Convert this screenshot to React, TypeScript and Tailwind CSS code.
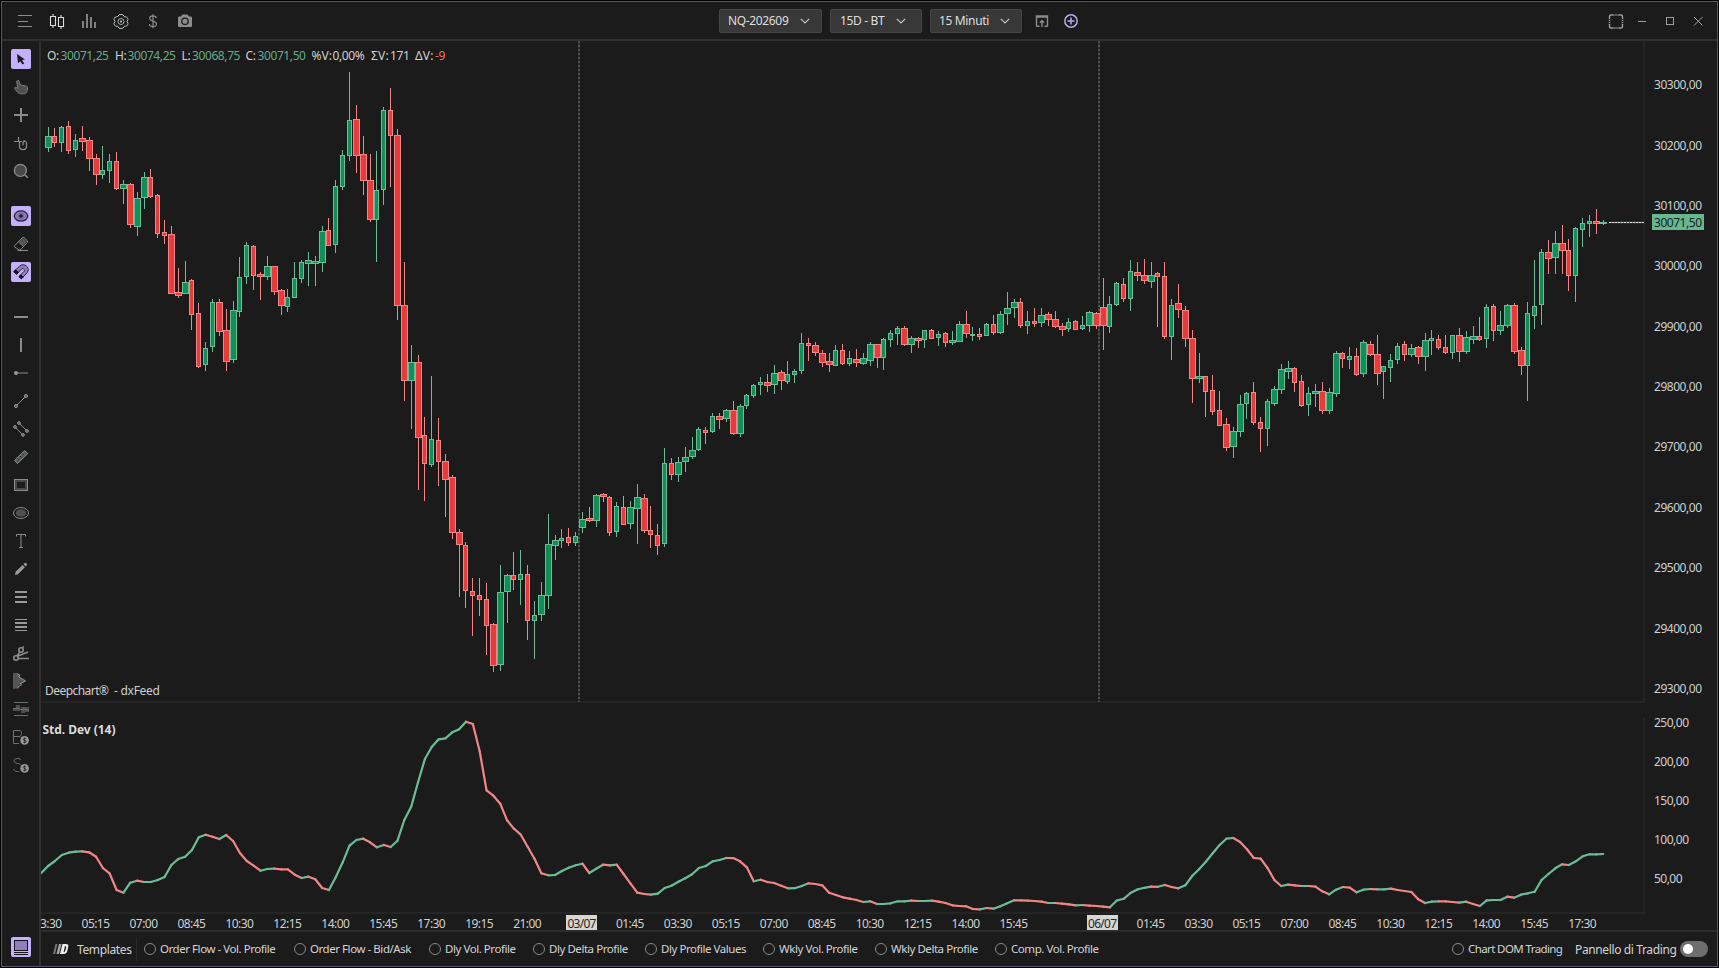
import type { ReactNode } from "react";

type Candle = [dir: "G" | "R", high: number, top: number, bottom: number, low: number];

const RAW_CANDLES = `
G127,136,148,152 R128,136,143,147 G126,127,143,152 R121,126,151,154 G134,140,150,157 R126,138,142,151 R137,140,159,171
R154,158,175,185 G146,170,175,179 G154,161,171,183 R152,161,189,190 G180,184,189,204 R183,184,225,228 G192,198,227,236
G172,177,198,209 R169,177,197,198 R194,195,234,238 R220,232,236,244 R226,234,294,294 R268,292,296,298 G261,282,294,294
R279,280,315,330 R303,313,367,368 G342,348,365,371 G299,302,347,352 R299,302,332,336 R309,330,362,371 G301,310,360,363
G257,277,312,317 G242,245,277,284 R245,246,276,290 R272,274,277,300 G256,266,277,280 R266,266,292,295 R289,290,306,315
G289,297,307,312 G262,278,298,298 G260,262,279,283 G252,260,264,286 G256,261,264,286 G226,231,263,272 R218,230,246,246
G180,186,245,253 G150,155,187,190 G72,120,156,161 R105,119,156,173 R136,154,181,195 R154,180,220,222 G151,190,220,262
G107,110,190,205 R88,110,136,187 R129,135,306,320 R262,305,381,401 G345,362,381,429 R355,362,438,490 R417,435,464,501
G376,439,465,467 R418,440,462,486 R454,461,480,517 R475,477,533,539 R529,532,545,597 R542,545,591,608 R578,591,596,636
R578,595,600,616 R583,599,626,655 R623,624,666,672 G565,592,665,671 G574,575,592,623 R552,575,580,590 G550,574,580,605
R565,574,621,640 G601,615,621,659 G582,595,615,621 G514,544,596,609 G535,540,546,560 G529,538,541,548 R528,537,543,546
G532,536,543,546 G512,519,528,533 R507,518,521,522 G494,495,521,527 R493,494,497,502 R496,497,533,536 G502,506,532,537
R496,507,525,525 G501,507,524,529 G484,497,509,544 R494,498,531,533 R506,530,535,548 R524,535,546,555 G448,463,544,547
R458,463,475,480 G457,462,475,482 G447,457,462,472 G437,450,457,459 G427,429,450,451 R427,430,433,444 G413,416,432,433
R413,416,420,429 G409,410,419,422 R401,410,434,435 G404,406,434,437 G394,395,406,409 G384,385,396,398 G377,382,385,395
R374,382,386,392 G365,373,385,394 R370,372,381,390 G361,374,382,384 G369,371,375,383 G333,343,371,374 R338,343,346,361
R342,345,353,356 R350,353,363,367 R353,361,365,372 G345,350,366,366 R344,350,364,365 G351,358,364,366 R349,359,363,367
G353,358,364,365 G342,344,361,366 R344,344,358,368 G338,339,358,370 G330,333,340,347 G326,328,334,345 R326,328,345,346
G336,338,345,353 R337,338,341,348 G330,330,340,348 R329,330,339,339 G331,334,338,346 R332,333,343,347 G331,340,343,345
G321,324,342,342 R311,324,334,338 G327,334,336,341 R328,334,337,340 G323,324,336,336 R315,324,333,335 G311,314,333,334
G292,308,314,325 G299,302,308,318 R298,302,326,328 G311,321,326,334 R308,321,324,327 G308,315,323,327 R312,314,320,326
R311,319,327,328 R323,326,330,336 G318,322,329,332 R320,321,330,330 G316,325,329,330 G311,312,326,332 R312,313,326,329
R278,307,326,350 G296,304,327,333 G282,283,305,306 R278,284,299,302 G260,271,299,311 R262,272,276,281 R259,275,281,284
G262,275,282,288 R272,273,277,327 R262,276,337,339 G299,305,337,360 R284,303,310,318 R306,310,339,347 R330,338,379,403
G353,376,379,383 R376,376,392,417 R375,390,412,415 R391,410,426,426 R418,424,448,451 G427,431,447,458 G395,404,432,437
G392,393,404,419 R382,392,423,425 R417,422,429,452 G399,401,429,446 G386,389,404,406 G364,369,390,394 G361,368,372,379
R367,368,383,392 R375,381,406,407 G387,393,405,416 G384,391,394,407 R382,391,411,414 G388,392,411,414 G351,353,394,397
R352,353,359,368 G347,356,360,369 R348,356,375,376 G340,342,374,377 R341,344,355,356 R335,354,374,385 G366,366,372,399
G354,360,368,382 G343,346,360,364 R341,344,355,361 G344,348,355,357 R346,347,357,364 G333,340,357,371 G330,338,341,355
R335,339,348,350 R335,347,353,354 G335,335,353,359 R328,335,352,362 G331,337,352,354 G326,336,340,344 R317,336,340,341
G304,307,339,348 R304,306,331,341 G311,325,331,335 G304,305,326,328 R303,305,352,354 R347,350,366,375 G302,313,366,401
G260,306,316,329 G249,252,305,325 R240,252,259,274 G231,243,258,274 R225,243,251,274 R239,250,276,291 G227,228,276,302
G218,223,230,247 G215,221,224,237 R209,221,224,234 G220,222,224,225`;

const CANDLES: Candle[] = RAW_CANDLES.trim()
  .split(/\s+/)
  .map((s) => [s[0], ...s.slice(1).split(",").map(Number)] as Candle);

/* Standard deviation line; the first sample belongs to the bar just left of the first candle. */
const STD_DEV = [
  873, 866, 861, 855, 852.7, 851.7, 851.3, 852.3, 856.7, 868, 873.7, 890, 892.7, 882.7, 880.7, 882, 882, 880, 877, 865,
  859, 856.7, 850, 837.3, 834.7, 836.7, 839, 835, 841, 853, 861, 865.7, 870.7, 869, 868.7, 869.3, 869.4, 874.7, 878,
  876.7, 879.3, 888, 890, 877, 862.3, 845.7, 840, 838.7, 842.3, 847.3, 845, 847, 840.7, 820, 806.7, 782.3, 759, 747,
  739.3, 738.3, 732.3, 729.3, 721.7, 724, 751.3, 790.3, 795.7, 803.7, 820.3, 828.7, 834.7, 846.7, 858.7, 873.3, 875.3,
  875, 871, 867.7, 865.3, 863.7, 873, 868.7, 864.7, 865.3, 864.7, 874, 883.3, 892.7, 894, 894.7, 893.7, 888, 885.7,
  881.7, 878.3, 874.3, 868, 866, 861.3, 860, 858, 858.1, 861.3, 867.3, 881.3, 879.7, 882, 883, 885.7, 888.3, 888.2, 886,
  883.3, 884, 885.3, 892.7, 895, 897.3, 898.7, 900, 902, 901.3, 904, 904, 903.3, 901.3, 901.3, 900.7, 901, 901, 900.7,
  901.7, 903, 905.3, 906, 906.3, 909, 909.3, 908, 908.7, 906.3, 903.3, 900.3, 900.4, 900.7, 901, 901.7, 903, 903, 903.7,
  904.3, 905.3, 905, 905.7, 906, 906.7, 907.3, 900.5, 898.8, 893, 889.5, 887.8, 886.7, 886.8, 885, 887, 888.3, 885.3,
  876, 869.3, 861.7, 853.3, 845, 838.7, 838, 842, 849.3, 858, 858.7, 868, 880, 886, 884.7, 885.3, 886, 886, 886.7,
  891.3, 894.3, 889.7, 887, 887.7, 892.3, 889.7, 889, 889.3, 889.3, 888.7, 890, 891, 892, 899.3, 903, 901.7, 901.3,
  901.4, 902, 902.7, 901.7, 904, 906, 900.3, 900, 900, 896.7, 897.7, 894.7, 893.3, 891.7, 880, 874, 868.3, 864.3, 865,
  861.3, 856.3, 854.3, 854.3, 854,
];

const barX = (i: number) => 48.1 + 6.8507 * i;

const GREEN = "#0f9058";
const GREEN_EDGE = "#6bbd97";
const RED = "#e83b3c";
const RED_EDGE = "#f28686";

const TIMES: [number, string][] = [
  [0, "03:30"], [7, "05:15"], [14, "07:00"], [21, "08:45"], [28, "10:30"], [35, "12:15"], [42, "14:00"],
  [49, "15:45"], [56, "17:30"], [63, "19:15"], [70, "21:00"], [85, "01:45"], [92, "03:30"], [99, "05:15"],
  [106, "07:00"], [113, "08:45"], [120, "10:30"], [127, "12:15"], [134, "14:00"], [141, "15:45"],
  [161, "01:45"], [168, "03:30"], [175, "05:15"], [182, "07:00"], [189, "08:45"], [196, "10:30"],
  [203, "12:15"], [210, "14:00"], [217, "15:45"], [224, "17:30"],
];

const DAYS: [number, string][] = [[78, "03/07"], [154, "06/07"]];

const PRICES = [30300, 30200, 30100, 30000, 29900, 29800, 29700, 29600, 29500, 29400, 29300];
const DEV_LEVELS = ["250,00", "200,00", "150,00", "100,00", "50,00"];

function CandleShape({ candle, index }: { candle: Candle; index: number }) {
  const [dir, high, top, bottom, low] = candle;
  const c = barX(index);
  const mid = Math.floor(c);
  const half = c - mid < 0.49 ? 3 : 2;
  const edge = dir === "G" ? GREEN_EDGE : RED_EDGE;
  const fill = dir === "G" ? GREEN : RED;
  return (
    <g>
      <rect x={mid} y={high} width={1} height={low - high} fill={edge} />
      <rect x={mid - half} y={top} width={half * 2 + 1} height={bottom - top} fill={edge} />
      {bottom - top > 2 && (
        <rect x={mid - half + 1} y={top + 1} width={half * 2 - 1} height={bottom - top - 2} fill={fill} />
      )}
    </g>
  );
}

function Chart() {
  return (
    <svg
      className="block h-[891px] w-[1676px] shrink-0"
      viewBox="41 41 1676 891"
      fontFamily="'Noto Sans', sans-serif"
      fontSize="12"
      fill="#d0d0d0"
    >
      <g shapeRendering="crispEdges">
        <rect x={41} y={701} width={1604} height={2} fill="#242424" />
        <rect x={1643} y={41} width={2} height={661} fill="#242424" />
        <rect x={1643} y={718} width={2} height={195} fill="#242424" />
        <rect x={41} y={912} width={1604} height={2} fill="#242424" />
        <rect x={41} y={930} width={1676} height={2} fill="#2c2c2c" />
        {[579, 1099].map((x) => (
          <g key={x}>
            <rect x={x - 1} y={41} width={2} height={661} fill="#2b2b2b" />
            <path d={`M${x} 41V702`} stroke="#505050" strokeWidth={2} strokeDasharray="2 2" />
          </g>
        ))}
        {CANDLES.map((c, i) => (
          <CandleShape key={i} candle={c} index={i} />
        ))}
        <rect x={1609} y={221} width={35} height={3} fill="#2c2c2c" />
        <rect x={1609} y={222} width={35} height={1} fill="#777" />
        <path d="M1609 222.5H1644" stroke="#d5ded9" strokeWidth={1} strokeDasharray="2 1" />
      </g>

      <g strokeWidth={2.2} strokeLinecap="round">
        {STD_DEV.slice(1).map((y, i) => (
          <line
            key={i}
            x1={barX(i - 1)}
            y1={STD_DEV[i]}
            x2={barX(i)}
            y2={y}
            stroke={y <= STD_DEV[i] ? "#6bbd97" : "#f28686"}
          />
        ))}
      </g>

      {PRICES.map((p, i) => (
        <text key={p} x={1654} y={Math.round(89.2 + 60.37 * i)} textLength={48}>
          {p},00
        </text>
      ))}
      <rect x={1652} y={214} width={52} height={16} fill="#66b890" shapeRendering="crispEdges" />
      <text x={1654} y={227} textLength={48} fill="#16231c">
        30071,50
      </text>
      {DEV_LEVELS.map((v, i) => (
        <text key={v} x={1654} y={Math.round(727.3 + 38.8 * i)} textLength={v.length === 6 ? 35 : 28.5}>
          {v}
        </text>
      ))}

      {TIMES.map(([i, t]) => (
        <text key={i} x={barX(i) - 14.5} y={928} textLength={28.5}>
          {t}
        </text>
      ))}
      {DAYS.map(([i, t]) => (
        <g key={i}>
          <rect x={Math.round(barX(i)) - 16} y={915} width={31} height={15} fill="#d6d6d2" shapeRendering="crispEdges" />
          <text x={barX(i) - 15} y={928} textLength={29} fill="#262626">
            {t}
          </text>
        </g>
      ))}

      <text x={45} y={695}>
        <tspan textLength={64}>Deepchart®</tspan>
        <tspan x={114} textLength={46}>- dxFeed</tspan>
      </text>
      <text x={42.5} y={734} textLength={73} fontWeight={700} fill="#dcdcdc">
        Std. Dev (14)
      </text>
    </svg>
  );
}

function Stat({ label, value, width, gap, tone }: { label: string; value: string; width: string; gap: string; tone: string }) {
  return (
    <span className={`flex shrink-0 ${width}`}>
      <span className={`shrink-0 ${gap}`}>{label}</span>
      <span className={tone}>{value}</span>
    </span>
  );
}

function Tool({ children, active = false }: { children: ReactNode; active?: boolean }) {
  return (
    <div className="flex h-7 w-[37px] items-center justify-center">
      <div className={active ? "size-5 rounded-[2px] bg-[#c3b1fd]" : "size-5"}>
        <svg viewBox="0 0 20 20" className="size-5" fill="none" stroke="#8c8c8c" strokeWidth={1}>
          {children}
        </svg>
      </div>
    </div>
  );
}

function Coin() {
  return (
    <g>
      <circle cx={13.6} cy={13.4} r={4.3} fill="#989898" stroke="none" />
      <path d="M15.2 11.8C14.6 11.1 12.2 11 12.2 12.4C12.2 13.8 15.2 13 15.2 14.5C15.2 15.8 12.6 15.8 12 14.9M13.7 10.5V16.3" stroke="#2a2a2a" strokeWidth={0.9} />
    </g>
  );
}

function Toolbar() {
  return (
    <aside className="flex w-[39px] shrink-0 flex-col border-r-2 border-[#303030] pt-1">
      <div className="flex flex-col">
        <Tool active>
          <path d="M6 5L14 10.4L11 11L13.2 14.6L11.4 15.6L9.4 12.2L7 14.2Z" fill="#1b1b1b" stroke="none" />
        </Tool>
        <Tool>
          <path d="M6.2 3.6C7.4 2.9 8 3.8 8.3 4.8L9.3 8L14.5 8.8C16.4 9.2 16.8 10.4 16.5 12L15.8 14.6C15.3 16.2 14.3 16.8 12.8 16.8H9.4C8 16.8 7.2 16 6.4 15L3.6 11.6C3.3 10.6 4.3 10 5.2 10.4L7 11.4L5.7 5.2C5.6 4.6 5.7 3.9 6.2 3.6Z" fill="#505050" stroke="#7c7c7c" />
        </Tool>
        <Tool>
          <path d="M10 3V17M3 10H17" strokeWidth={2} />
        </Tool>
        <Tool>
          <path d="M3 8.5H11M7.5 4V8.5M8.5 8.5V13.5C8.5 17.6 15.5 17.6 15.5 13.5V10C15.5 8 12 8 12 10V12.5M12 8.5L14 7.5" strokeWidth={1.2} />
        </Tool>
        <Tool>
          <circle cx={9.4} cy={9.4} r={6} fill="#484848" strokeWidth={1.3} />
          <path d="M13.8 13.8L16.8 16.8" strokeWidth={1.5} />
        </Tool>
      </div>

      <div className="mt-[17px] flex flex-col">
        <Tool active>
          <path d="M3.2 10C5 3.2 15 3.2 16.8 10C15 16.8 5 16.8 3.2 10Z" fill="#8f80bb" stroke="#2a2440" strokeWidth={1.2} />
          <circle cx={10} cy={10} r={3} stroke="#6b5e92" strokeWidth={0.8} />
          <circle cx={10} cy={10} r={1.8} fill="#17141f" stroke="none" />
        </Tool>
        <Tool>
          <path d="M3.6 11.8L11.2 3.8Q12.2 3 13.2 3.8L16.2 6.6Q17 7.5 16.2 8.5L9.8 15.4Q8.6 16.4 7.4 15.4L3.8 13.2Q3.2 12.5 3.6 11.8ZM7.5 7.8L12.5 12.4M6.5 16.5H17" />
          <path d="M8 7.5L12 3.8L16 7.5L12.3 12Z" fill="#555" stroke="none" />
        </Tool>
        <Tool active>
          <path d="M2.8 9.6L8.8 4C13.5 0 20 6.4 16 10.8L10.4 16.8L8 14.6L13 9.4C14.4 7.6 12.2 5.8 10.8 7L5.4 12.2Z" fill="#8f80bb" stroke="#2a2440" strokeWidth={1} />
          <path d="M2.8 9.6L4.8 7.8L7.4 10.4L5.4 12.2ZM8 14.6L9.8 12.8L12.2 15L10.4 16.8Z" fill="#17141f" stroke="#17141f" />
        </Tool>
      </div>

      <div className="mt-[17px] flex flex-col">
        <Tool>
          <path d="M3 10H17" strokeWidth={2} />
        </Tool>
        <Tool>
          <path d="M10 3V17" strokeWidth={2} />
        </Tool>
        <Tool>
          <path d="M6 10H17" stroke="#5c6661" strokeWidth={1.6} />
          <circle cx={5} cy={10} r={2} fill="#989898" stroke="none" />
        </Tool>
        <Tool>
          <path d="M5 15L15 5" />
          <circle cx={5} cy={15} r={1.6} fill="#666" />
          <circle cx={15} cy={5} r={1.6} fill="#666" />
        </Tool>
        <Tool>
          <path d="M4 8L12 16M8 4L16 12" />
          <g fill="#666">
            <circle cx={4} cy={8} r={1.4} />
            <circle cx={12} cy={16} r={1.4} />
            <circle cx={8} cy={4} r={1.4} />
            <circle cx={16} cy={12} r={1.4} />
          </g>
        </Tool>
        <Tool>
          <path d="M3.4 13.4L13.6 3.6L16.8 6.6L6.4 16.6Z" fill="#555f5a" />
          <path d="M6.5 11.5L7.7 12.7M9 9L10.4 10.4M11.5 6.7L12.7 7.9" stroke="#222" />
        </Tool>
        <Tool>
          <rect x={3.5} y={4.5} width={13} height={11} fill="#484848" />
          <rect x={6} y={7} width={8} height={6} fill="#1b1b1b" stroke="none" />
        </Tool>
        <Tool>
          <ellipse cx={10} cy={10} rx={7.5} ry={5.5} />
          <ellipse cx={10} cy={10} rx={5.2} ry={3.8} fill="#505050" stroke="none" />
        </Tool>
        <Tool>
          <path d="M5.5 5.5V3.5H14.5V5.5M10 3.5V16.5M8 16.5H12" />
        </Tool>
        <Tool>
          <path d="M4 16L4.6 12.8L11.6 5.9L13.9 8.2L7 15.2ZM12.4 5.1L13.4 4.2Q14.6 3.4 15.5 4.4Q16.5 5.4 15.6 6.5L14.7 7.4Z" fill="#9a9a9a" stroke="none" />
        </Tool>
        <Tool>
          <path d="M4 5H16M4 10H16M4 15H16" strokeWidth={2} stroke="#999" />
        </Tool>
        <Tool>
          <path d="M4 4.5H16M4 15.5H16" stroke="#999" />
          <path d="M4 8H16M4 12H16" strokeWidth={2} stroke="#999" />
        </Tool>
        <Tool>
          <path d="M5.4 14L12.6 3.4M7 13L17 9M7 15.5H18" strokeWidth={1.5} />
          <circle cx={5} cy={15} r={2.2} fill="#1b1b1b" strokeWidth={1.6} />
          <circle cx={10} cy={7} r={2.2} fill="#1b1b1b" strokeWidth={1.6} />
        </Tool>
        <Tool>
          <path d="M2 2H6L10 4L8 5L11 7L14 9V11L11 12L9 14L7 15L8 17L2 18Z" fill="#555" stroke="none" />
          <path d="M6 2.5L9 4.5L7.5 5.5L10 7.5L14.5 10L9.5 12.5L10.5 14L7.5 15.5L6.5 17.5" />
        </Tool>
        <Tool>
          <path d="M3 3.5H17M3 16.5H17" stroke="#666f6b" />
          <path d="M2 9H5V12H2ZM5 6H9V12H5ZM10 8H14V14H10ZM14 8H18V13H14Z" fill="#4c4c4c" stroke="none" />
          <path d="M2 10L6 9L10 10.5L14 10L18 11.5" stroke="#777" />
        </Tool>
        <Tool>
          <path d="M2.5 3.5V16.5H8M2.5 3.5H8C11.5 3.5 11.5 9 8 9.5H2.5M8 9.5L9.5 10" stroke="#6f6f6f" />
          <Coin />
        </Tool>
        <Tool>
          <path d="M10 5C8.5 2.6 3 2.8 3 6C3 9 10 8 9.5 10M2.5 14C3.2 16 5.5 17 8 16.5" stroke="#6f6f6f" />
          <Coin />
        </Tool>
      </div>

      <div className="mt-auto mb-[5px]">
        <Tool active>
          <rect x={3.5} y={3.5} width={13} height={10} fill="#8f80bb" stroke="#17141f" />
          <path d="M3 15.5H17M3 17.5H17" stroke="#17141f" />
        </Tool>
      </div>
    </aside>
  );
}

function Dropdown({ label, box, text }: { label: string; box: string; text: string }) {
  return (
    <button className={`flex h-6 items-center rounded-[2px] border border-[#454545] bg-[#383838] text-left text-[#dedede] ${box}`}>
      <span className={`whitespace-nowrap ${text}`}>{label}</span>
      <svg viewBox="0 0 10 6" className="h-1.5 w-2.5" fill="none" stroke="#c4c4c4" strokeWidth={1.2}>
        <path d="M.8.8L5 5L9.2.8" />
      </svg>
    </button>
  );
}

function Header() {
  return (
    <header className="flex h-[39px] shrink-0 items-center border-b-2 border-[#303030]">
      <svg viewBox="0 0 200 37" className="h-[37px] w-[200px]" fill="none" stroke="#8c8c8c">
        <path d="M16 13.5H30M16 19.5H26M16 24.5H30" strokeWidth={1.2} />
        <g stroke="#dcdcdc" strokeWidth={1.1}>
          <path d="M48.5 14.5H53.5V23.5H48.5ZM51 12V14.5M51 23.5V26" />
          <path d="M56.5 15.5H61.5V24.5H56.5ZM59 13V15.5M59 24.5V27" />
        </g>
        <path d="M81 19V26M85 12V26M89 15V26M93 20V26" strokeWidth={1.8} />
        <g stroke="#b4c0ba">
          <path d="M117 12.8Q119 12.2 121 12.8L122.2 14.6L124.6 15Q126 16.4 126 17.6L125 19.4L126 21.4Q125.8 23 124.6 24L122.2 24.4L121 26.2Q119 26.8 117 26.2L115.8 24.4L113.4 24Q112.2 23 112 21.4L113 19.4L112 17.6Q112.2 16.2 113.4 15L115.8 14.6Z" strokeWidth={1} />
          <circle cx={119} cy={19.5} r={3} strokeWidth={0.9} />
          <circle cx={119} cy={19.5} r={1.1} fill="#b4c0ba" stroke="none" />
        </g>
        <path d="M154.3 16.2C154.2 13.2 147.7 13.2 147.7 16.3C147.7 19.6 154.5 18.6 154.5 22C154.5 25.4 147.4 25.3 147.4 21.9M151 12.2V26.2" strokeWidth={1.2} />
        <path d="M177 14.5H179L180.5 12.5H185.5L187 14.5H189Q190 14.5 190 15.5V24Q190 25 189 25H177Q176 25 176 24V15.5Q176 14.5 177 14.5Z" fill="#8c8c8c" stroke="none" />
        <circle cx={183} cy={19.3} r={3.2} fill="#8c8c8c" stroke="#1b1b1b" strokeWidth={1.3} />
      </svg>
      <div className="ml-[517px] flex items-center text-[12px] tracking-[-0.35px]">
        <Dropdown label="NQ-202609" box="w-[103px] pl-2" text="w-[72px]" />
        <Dropdown label="15D - BT" box="ml-2 w-[92px] pl-[9px]" text="w-[56px]" />
        <Dropdown label="15 Minuti" box="ml-2 w-[92px] pl-2" text="w-[61px]" />
      </div>
      <svg viewBox="0 0 14 14" className="ml-[13px] size-3.5" fill="none" stroke="#8c8c8c" strokeWidth={1.4}>
        <path d="M4.5 12.3H2Q1.5 12.3 1.5 11.8V2H12.5V11.8Q12.5 12.3 12 12.3H9.5M1.5 3H12.5M7 13V6.8M4.8 8.7L7 6.5L9.2 8.7" />
      </svg>
      <svg viewBox="0 0 14 14" className="ml-[15px] size-3.5" fill="none" stroke="#baa9f2" strokeWidth={1.5}>
        <circle cx={7} cy={7} r={6.2} />
        <path d="M7 3.5V10.5M3.5 7H10.5" />
      </svg>
      <svg viewBox="0 0 100 20" className="mr-[11px] ml-auto h-5 w-[100px]" fill="none" stroke="#a0a0a0">
        <rect x={3.5} y={4} width={13} height={13} rx={1.5} strokeWidth={1.4} />
        <path d="M3.5 8V13M16.5 8V13M7.5 4H12.5M7.5 17H12.5" stroke="#1b1b1b" strokeWidth={1.5} strokeDasharray="1 1" />
        <path d="M32 10.5H40" />
        <rect x={60.5} y={6.5} width={7} height={7} />
        <path d="M88 6L96.5 14.5M96.5 6L88 14.5" />
      </svg>
    </header>
  );
}

function Option({ label, width, tight = false }: { label: string; width: string; tight?: boolean }) {
  return (
    <label className={`flex shrink-0 items-center gap-1 whitespace-nowrap ${width}`}>
      <span className="size-3 rounded-full border border-[#8a8a8a]" />
      <span className={`text-[11.5px] ${tight ? "tracking-[-0.6px]" : "tracking-[-0.45px]"}`}>{label}</span>
    </label>
  );
}

function Footer() {
  return (
    <footer className="flex h-[34px] shrink-0 items-center text-[12px] tracking-[-0.37px] text-[#d4d4d4]">
      <svg viewBox="0 0 16 12" className="ml-3 h-3 w-4">
        <path d="M2.5 1H4.5L2 11H0Z" fill="#777" />
        <path d="M6 1H8.5L6 11H3.5Z" fill="#aaa" />
        <path d="M9.5 1H13Q16 1 15.2 4L14.3 8Q13.5 11 10.5 11H7ZM12 3L10.6 9Q12 9 12.4 7.5L13.2 4.4Q13.4 3 12 3Z" fill="#f0f0f0" fillRule="evenodd" />
      </svg>
      <span className="mt-0.5 ml-2 w-[59px] shrink-0">Templates</span>
      <div className="mr-[7px] h-6 w-px bg-[#282828]" />
      <Option label="Order Flow - Vol. Profile" width="w-[150px]" />
      <Option label="Order Flow - Bid/Ask" width="w-[135px]" />
      <Option label="Dly Vol. Profile" width="w-[104px]" />
      <Option label="Dly Delta Profile" width="w-[112px]" />
      <Option label="Dly Profile Values" width="w-[118px]" />
      <Option label="Wkly Vol. Profile" width="w-[112px]" />
      <Option label="Wkly Delta Profile" width="w-[120px]" />
      <Option label="Comp. Vol. Profile" width="w-[120px]" />
      <div className="mr-[9px] ml-auto flex items-center">
        <Option label="Chart DOM Trading" width="w-[123px]" tight />
        <span className="mt-0.5 w-[105px] whitespace-nowrap">Pannello di Trading</span>
        <span className="flex h-4 w-7 items-center rounded-full bg-[#6e6e6e] pl-[3px]">
          <span className="size-2.5 rounded-full bg-white" />
        </span>
      </div>
    </footer>
  );
}

export default function App() {
  return (
    <div className="h-[968px] w-[1719px] overflow-hidden bg-black p-px font-['Noto_Sans',sans-serif]">
      <div className="flex h-full flex-col border border-[#5a5270] bg-[#1b1b1b]">
        <Header />
        <div className="flex min-h-0 flex-1">
          <Toolbar />
          <main className="relative flex min-w-0 flex-1 flex-col">
            <div className="absolute top-1.5 left-1.5 flex text-[12px] leading-[18px] tracking-[-0.4px] whitespace-nowrap text-[#d0d0d0]">
              <Stat label="O:" value="30071,25" width="w-[68px]" gap="w-[13.5px]" tone="text-[#5fae89]" />
              <Stat label="H:" value="30074,25" width="w-[66.5px]" gap="w-[12.5px]" tone="text-[#5fae89]" />
              <Stat label="L:" value="30068,75" width="w-[64px]" gap="w-[10.5px]" tone="text-[#5fae89]" />
              <Stat label="C:" value="30071,50" width="w-[66px]" gap="w-[12px]" tone="text-[#5fae89]" />
              <Stat label="%V:" value="0,00%" width="w-[59.5px]" gap="w-[21px] tracking-normal" tone="text-[#d0d0d0]" />
              <Stat label="ΣV:" value="171" width="w-[44px]" gap="w-[19px] tracking-[0.2px]" tone="text-[#d0d0d0]" />
              <Stat label="ΔV:" value="-9" width="w-[32px]" gap="w-[20px] tracking-[0.2px]" tone="text-[#f06a6a]" />
            </div>
            <Chart />
            <Footer />
          </main>
        </div>
      </div>
    </div>
  );
}
